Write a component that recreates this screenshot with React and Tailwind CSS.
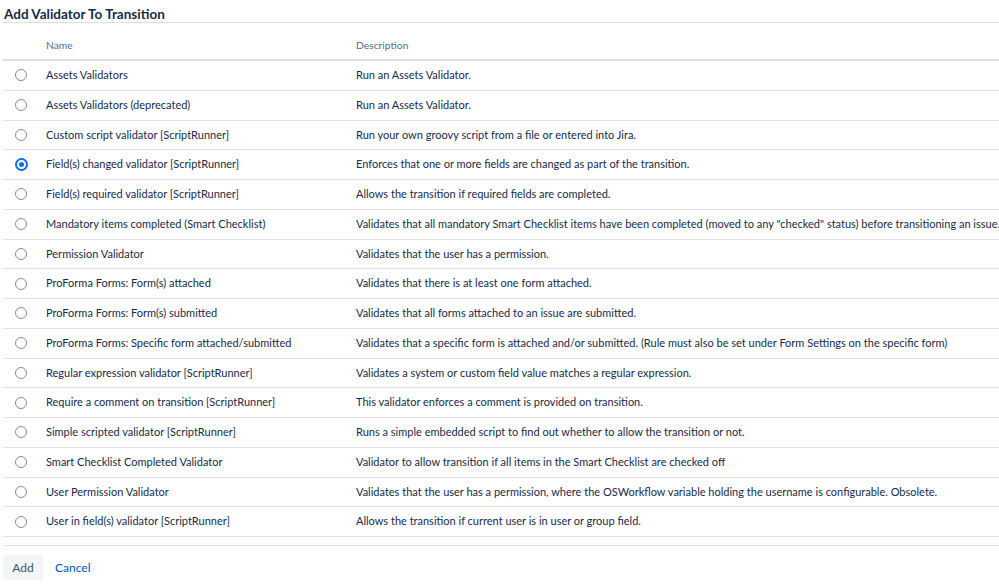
const rows = [
  ['Assets Validators', 'Run an Assets Validator.'],
  ['Assets Validators (deprecated)', 'Run an Assets Validator.'],
  ['Custom script validator [ScriptRunner]', 'Run your own groovy script from a file or entered into Jira.'],
  ['Field(s) changed validator [ScriptRunner]', 'Enforces that one or more fields are changed as part of the transition.'],
  ['Field(s) required validator [ScriptRunner]', 'Allows the transition if required fields are completed.'],
  ['Mandatory items completed (Smart Checklist)', 'Validates that all mandatory Smart Checklist items have been completed (moved to any "checked" status) before transitioning an issue.'],
  ['Permission Validator', 'Validates that the user has a permission.'],
  ['ProForma Forms: Form(s) attached', 'Validates that there is at least one form attached.'],
  ['ProForma Forms: Form(s) submitted', 'Validates that all forms attached to an issue are submitted.'],
  ['ProForma Forms: Specific form attached/submitted', 'Validates that a specific form is attached and/or submitted. (Rule must also be set under Form Settings on the specific form)'],
  ['Regular expression validator [ScriptRunner]', 'Validates a system or custom field value matches a regular expression.'],
  ['Require a comment on transition [ScriptRunner]', 'This validator enforces a comment is provided on transition.'],
  ['Simple scripted validator [ScriptRunner]', 'Runs a simple embedded script to find out whether to allow the transition or not.'],
  ['Smart Checklist Completed Validator', 'Validator to allow transition if all items in the Smart Checklist are checked off'],
  ['User Permission Validator', 'Validates that the user has a permission, where the OSWorkflow variable holding the username is configurable. Obsolete.'],
  ['User in field(s) validator [ScriptRunner]', 'Allows the transition if current user is in user or group field.'],
];

function Radio({ checked }) {
  return checked ? (
    <span className="w-[13px] h-[13px] rounded-full border-2 border-[#0f6ef0] bg-white flex items-center justify-center">
      <span className="w-[5px] h-[5px] rounded-full bg-[#0f6ef0]" />
    </span>
  ) : (
    <span className="w-[12px] h-[12px] rounded-full border border-[#8a8a8a] bg-white" />
  );
}

export default function App() {
  return (
    <div className="w-[999px] h-[588px] overflow-hidden bg-white text-[#172b4d] font-['Lato',sans-serif]">
      <div className="pl-[3px] pt-[6px]">
        <h2 className="pl-[1px] text-[13.5px] font-bold leading-[16px] border-b border-[#dfe1e6]">Add Validator To Transition</h2>
      </div>
      <div className="pl-[3px]">
        <div className="flex items-center h-[38px] pt-[9px] border-b-2 border-[#dfe1e6] text-[10.3px] text-[#5e6c84] whitespace-nowrap">
          <div className="w-[43px] shrink-0" />
          <div className="w-[310px] shrink-0">Name</div>
          <div className="shrink-0">Description</div>
        </div>
        {rows.map(([name, desc], i) => (
          <div key={name} className="flex items-center h-[29.75px] border-b border-[#dfe1e6] text-[11px] whitespace-nowrap overflow-hidden">
            <div className="w-[43px] shrink-0 flex justify-center pr-[7px]">
              <Radio checked={i === 3} />
            </div>
            <div className="w-[310px] shrink-0">{name}</div>
            <div className="shrink-0">{desc}</div>
          </div>
        ))}
        <div className="h-[9px] border-b border-[#dfe1e6]" />
        <div className="flex items-center gap-[12px] pt-[9px]">
          <button className="h-[25px] w-[40px] bg-[#f4f5f7] rounded-[3px] text-[12px] text-[#42526e]">Add</button>
          <span className="text-[12px] text-[#0052cc]">Cancel</span>
        </div>
      </div>
    </div>
  );
}
